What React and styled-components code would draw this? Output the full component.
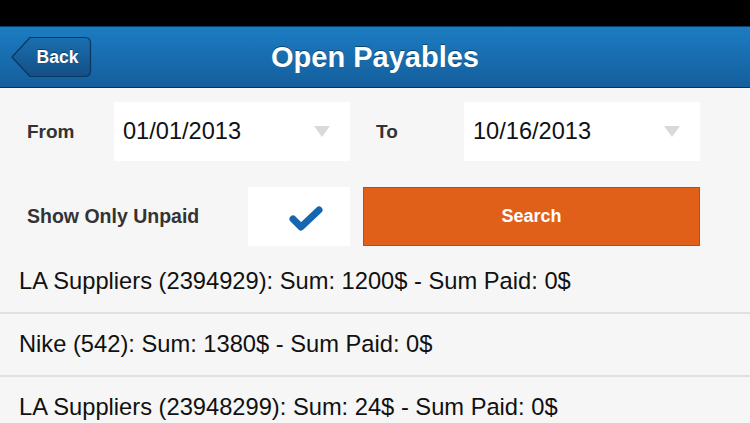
import React from "react";
import styled, { createGlobalStyle } from "styled-components";

const GlobalStyle = createGlobalStyle`
  html, body {
    margin: 0;
    padding: 0;
    background: #f6f6f6;
    font-family: "Liberation Sans", Arial, sans-serif;
  }
`;

const Screen = styled.div`
  width: 750px;
  height: 423px;
  overflow: hidden;
  background: #f6f6f6;
  display: flex;
  flex-direction: column;
`;

const StatusBar = styled.div`
  height: 26px;
  background: #000;
  flex-shrink: 0;
`;

const NavBar = styled.header`
  position: relative;
  height: 60px;
  flex-shrink: 0;
  background: linear-gradient(#1c7cc2, #145e9c);
  border-top: 1px solid #0d3f6c;
  border-bottom: 1px solid #0e2f4f;
  display: flex;
  align-items: center;
  justify-content: center;
`;

const BackButton = styled.button`
  position: absolute;
  left: 11px;
  top: 9px;
  height: 42px;
  width: 81px;
  padding: 0 0 0 12px;
  border: none;
  background: transparent;
  color: #fff;
  font: bold 17.5px "Liberation Sans", Arial, sans-serif;
  text-shadow: 0 -1px 0 rgba(0, 0, 0, 0.4);
  display: flex;
  align-items: center;
  justify-content: center;
  cursor: pointer;

  svg {
    position: absolute;
    inset: 0;
    z-index: 0;
  }
  span {
    position: relative;
    z-index: 1;
  }
`;

const Title = styled.h1`
  margin: 0;
  color: #fff;
  font: bold 29px "Liberation Sans", Arial, sans-serif;
  text-shadow: 0 -1px 0 rgba(0, 0, 0, 0.4);
`;

const Form = styled.div`
  display: flex;
  flex-direction: column;
  gap: 26px;
  padding: 14px 50px 0 27px;
`;

const FormRow = styled.div`
  display: flex;
  align-items: center;
  height: 59px;
`;

const Label = styled.div`
  width: ${(p) => p.$width}px;
  flex-shrink: 0;
  color: #333;
  font-size: ${(p) => p.$size || 19}px;
  font-weight: bold;
`;

const Select = styled.div`
  width: 236px;
  height: 59px;
  box-sizing: border-box;
  background: #fff;
  display: flex;
  align-items: center;
  justify-content: space-between;
  padding: 0 20px 0 9px;
  font-size: 23.6px;
  color: #111;
  margin-right: ${(p) => p.$gap || 0}px;
`;

const Arrow = styled.span`
  width: 0;
  height: 0;
  border-left: 8px solid transparent;
  border-right: 8px solid transparent;
  border-top: 11px solid #d9d9d9;
`;

const CheckBox = styled.div`
  width: 102px;
  height: 59px;
  background: #fff;
  display: flex;
  align-items: center;
  justify-content: center;
  margin-right: 13px;
  padding: 2px 0 0 14px;
  box-sizing: border-box;
`;

const SearchButton = styled.button`
  width: 337px;
  height: 59px;
  background: #e0601a;
  border: 1px solid #b94d14;
  color: #fff;
  font: bold 18px "Liberation Sans", Arial, sans-serif;
  cursor: pointer;
`;

const List = styled.ul`
  list-style: none;
  margin: 5px 0 0;
  padding: 0;
`;

const Item = styled.li`
  height: 63px;
  box-sizing: border-box;
  border-bottom: 2px solid #e0e0e0;
  padding: 0 0 0 19px;
  display: flex;
  align-items: center;
  font-size: 23.7px;
  color: #111;
  white-space: nowrap;
`;

const payables = [
  { name: "LA Suppliers", id: "2394929", sum: 1200, paid: 0 },
  { name: "Nike", id: "542", sum: 1380, paid: 0 },
  { name: "LA Suppliers", id: "23948299", sum: 24, paid: 0 },
];

export default function App() {
  return (
    <Screen>
      <GlobalStyle />
      <StatusBar />
      <NavBar>
        <BackButton>
          <svg width="81" height="42" viewBox="0 0 81 42">
            <defs>
              <linearGradient id="backGrad" x1="0" y1="0" x2="0" y2="1">
                <stop offset="0" stopColor="#1a6fb0" />
                <stop offset="1" stopColor="#134f86" />
              </linearGradient>
            </defs>
            <path
              d="M1 21 L19 1.5 H74 Q79.5 1.5 79.5 7 V35 Q79.5 40.5 74 40.5 H19 Z"
              fill="url(#backGrad)"
              stroke="#0c365e"
              strokeWidth="1.2"
              strokeLinejoin="round"
            />
          </svg>
          <span>Back</span>
        </BackButton>
        <Title>Open Payables</Title>
      </NavBar>

      <Form>
        <FormRow>
          <Label $width={87}>From</Label>
          <Select $gap={26}>
            01/01/2013
            <Arrow />
          </Select>
          <Label $width={88}>To</Label>
          <Select>
            10/16/2013
            <Arrow />
          </Select>
        </FormRow>
        <FormRow>
          <Label $width={221} $size={19.5}>Show Only Unpaid</Label>
          <CheckBox>
            <svg width="34" height="26" viewBox="0 0 34 26">
              <path
                d="M4 14 L12 22 L30 5"
                fill="none"
                stroke="#1565b0"
                strokeWidth="7"
                strokeLinecap="round"
                strokeLinejoin="round"
              />
            </svg>
          </CheckBox>
          <SearchButton>Search</SearchButton>
        </FormRow>
      </Form>

      <List>
        {payables.map((p, i) => (
          <Item key={i}>
            {`${p.name} (${p.id}): Sum: ${p.sum}$ - Sum Paid: ${p.paid}$`}
          </Item>
        ))}
      </List>
    </Screen>
  );
}
